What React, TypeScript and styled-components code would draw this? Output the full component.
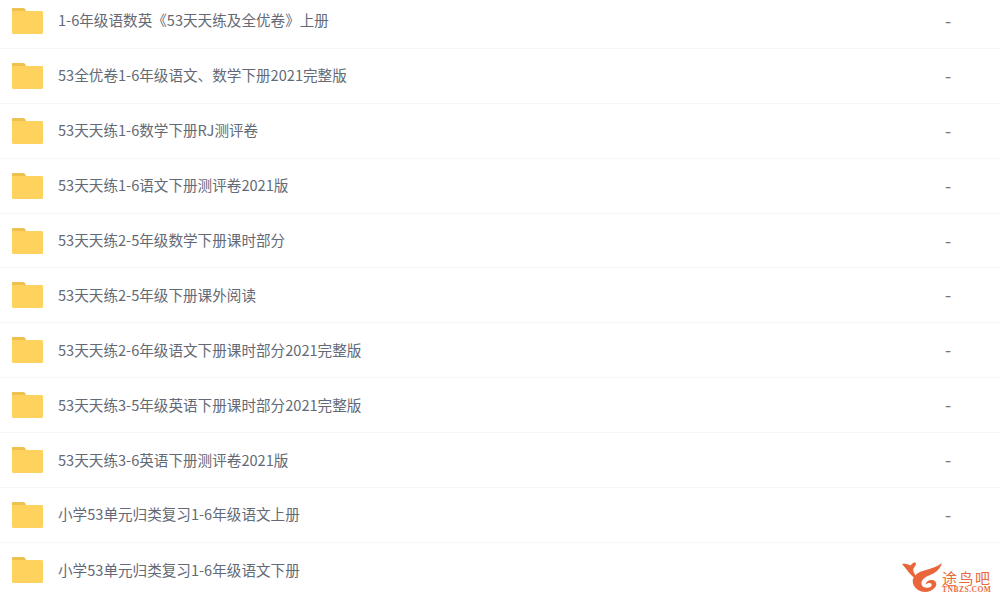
import React from "react";
import styled, { createGlobalStyle } from "styled-components";

const Global = createGlobalStyle`
  html, body { margin: 0; padding: 0; background: #fff; overflow: hidden; height: 597px; }
`;
const Page = styled.div`
  position: relative;
  width: 1000px;
  height: 597px;
  overflow: hidden;
  background: #fff;
  font-family: "Noto Sans CJK SC", "Liberation Sans", sans-serif;
`;
const List = styled.ul`
  list-style: none;
  margin: -6px 0 0;
  padding: 0;
`;
const Row = styled.li`
  box-sizing: border-box;
  height: 54.9px;
  display: flex;
  align-items: center;
  padding-left: 12px;
  border-bottom: 1px solid #f6f7f8;
  &:last-child {
    border-bottom: 0;
  }
`;
const FolderIcon = styled.svg`
  width: 31px;
  height: 26px;
  flex: none;
`;
const Name = styled.span`
  margin-left: 15px;
  flex: 1;
  font-size: 14.6px;
  line-height: 20px;
  margin-top: -1px;
  color: #636a76;
  white-space: nowrap;
`;
const Size = styled.span`
  width: 55px;
  flex: none;
  font-size: 18px;
  line-height: 20px;
  margin-top: -2px;
  color: #777;
`;
const Logo = styled.div`
  position: absolute;
  left: 902px;
  top: 562px;
  display: flex;
  align-items: flex-start;
  background: #fff;
`;
const LogoText = styled.div`
  display: flex;
  flex-direction: column;
  align-items: center;
  color: #e96b3c;
  margin-top: 8px;
`;
const LogoCn = styled.span`
  font-size: 15px;
  line-height: 16px;
  letter-spacing: 1.5px;
`;
const LogoEn = styled.span`
  font-family: "Liberation Serif", serif;
  font-size: 7.5px;
  line-height: 8px;
  font-weight: 700;
  letter-spacing: 0.5px;
`;

const rows = [
  { name: "1-6年级语数英《53天天练及全优卷》上册", size: "-" },
  { name: "53全优卷1-6年级语文、数学下册2021完整版", size: "-" },
  { name: "53天天练1-6数学下册RJ测评卷", size: "-" },
  { name: "53天天练1-6语文下册测评卷2021版", size: "-" },
  { name: "53天天练2-5年级数学下册课时部分", size: "-" },
  { name: "53天天练2-5年级下册课外阅读", size: "-" },
  { name: "53天天练2-6年级语文下册课时部分2021完整版", size: "-" },
  { name: "53天天练3-5年级英语下册课时部分2021完整版", size: "-" },
  { name: "53天天练3-6英语下册测评卷2021版", size: "-" },
  { name: "小学53单元归类复习1-6年级语文上册", size: "-" },
  { name: "小学53单元归类复习1-6年级语文下册", size: "" },
];

const Folder = () => (
  <FolderIcon viewBox="0 0 31 26">
    <path d="M1 0h10c1.500 0 2.500.8 3 3.500H0V1c0-.6.400-1 1-1z" fill="#eec04f" />
    <path d="M0 3h29.500c.8 0 1.500.7 1.500 1.500v20c0 .8-.7 1.500-1.500 1.500h-28C.7 26 0 25.300 0 24.500V3z" fill="#fed25c" />
  </FolderIcon>
);

export default function App() {
  return (
    <Page>
      <Global />
      <List>
        {rows.map((r) => (
          <Row key={r.name}>
            <Folder />
            <Name>{r.name}</Name>
            <Size>{r.size}</Size>
          </Row>
        ))}
      </List>
      <Logo>
        <svg width="40" height="31" viewBox="0 0 40 31">
          <path d="M0 2c3-.5 6 .3 8.500 1.500C9.500 1.500 11.500 0 13.500.5c1 1 .4 3-1 4.500-1.500 1.600-1.700 3.500-.5 5.500 1 2 2 4 1 5.500C9 14 4.500 7 0 2z" fill="#e8663a" />
          <path d="M40 1c-2 7-7 10-13 12.500-5 2-8 5-7.500 8.500.5 4 6.500 5 9.500 2.500 1.500-1.300.5-3.500-1.500-3.500-1.500 0-3 .7-4 1.500.5-3 3.500-5 7-4.500 3.800.6 5 4.500 2.500 7.500-3.500 4.500-11.500 6-17 2.500C10 24 9 17.500 13.500 13c6-6 18-5 26.500-12z" fill="#e8663a" />
        </svg>
        <LogoText>
          <LogoCn>途鸟吧</LogoCn>
          <LogoEn>TNBZS.COM</LogoEn>
        </LogoText>
      </Logo>
    </Page>
  );
}
